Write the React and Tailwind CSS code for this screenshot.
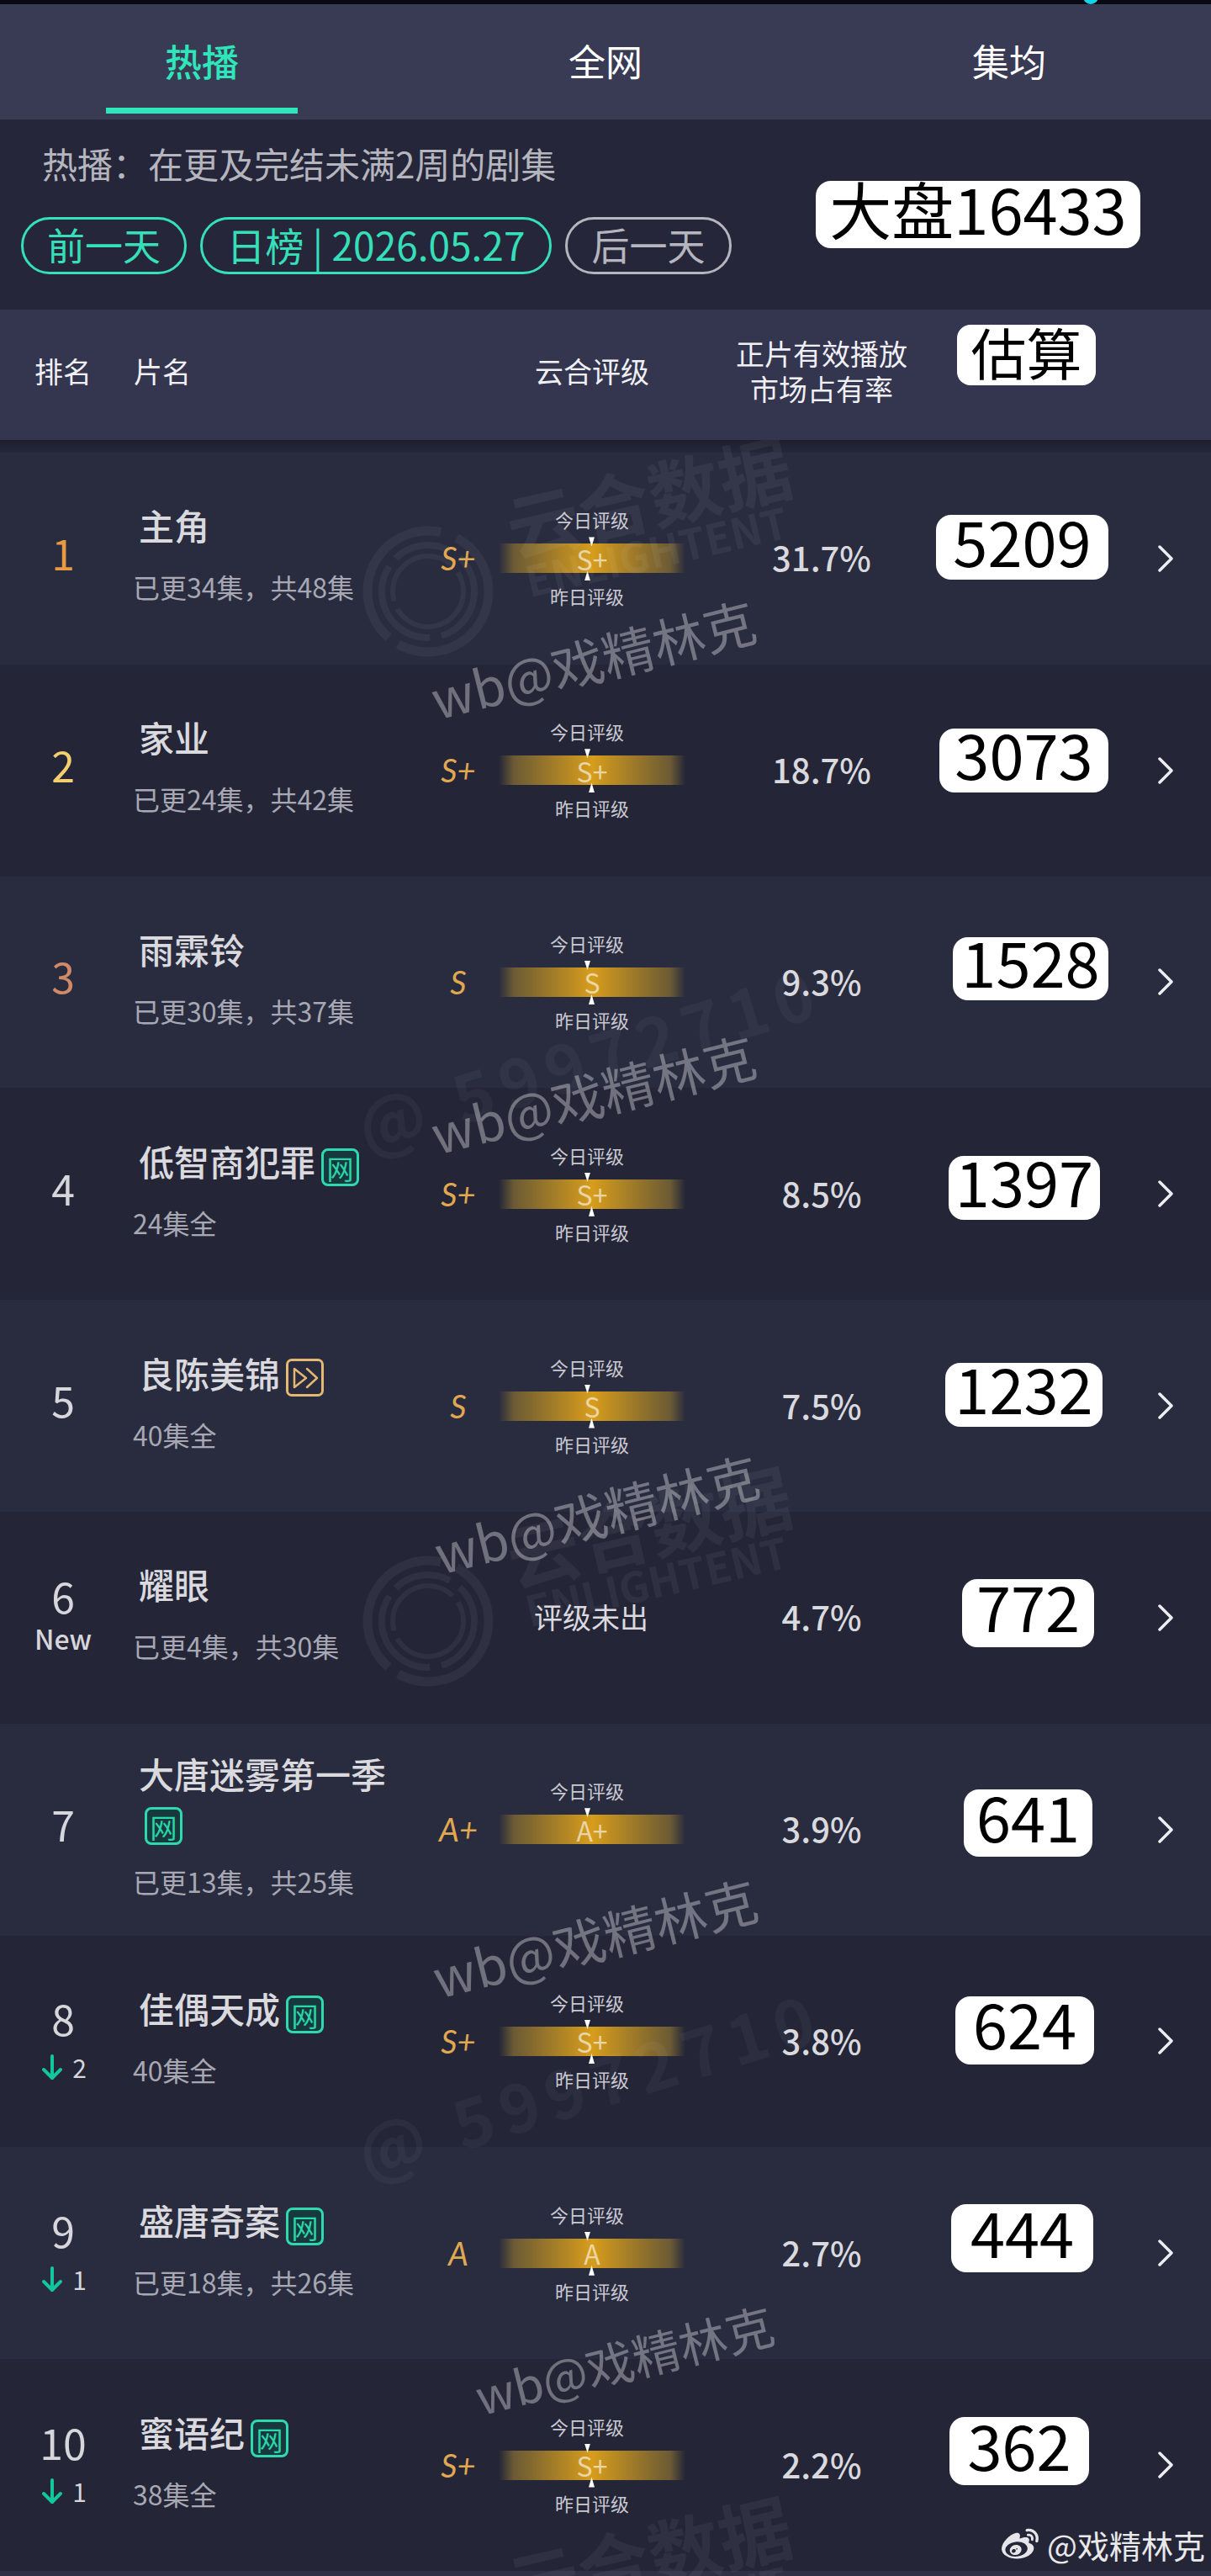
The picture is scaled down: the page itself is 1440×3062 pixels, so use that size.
import { FaWeibo } from 'react-icons/fa';

const rows = [
  { rank: '1', rankColor: 'text-[#e89a42]', title: '主角', sub: '已更34集，共48集', grade: 'S+', pct: '31.7%', value: '5209', box: 'ml-[1px] mt-[74px] w-[205px] h-[77px]', swap: true },
  { rank: '2', rankColor: 'text-[#f3cf6e]', title: '家业', sub: '已更24集，共42集', grade: 'S+', pct: '18.7%', value: '3073', box: 'ml-[5px] mt-[76px] w-[201px] h-[76px]' },
  { rank: '3', rankColor: 'text-[#d08a68]', title: '雨霖铃', sub: '已更30集，共37集', grade: 'S', pct: '9.3%', value: '1528', box: 'ml-[21px] mt-[72px] w-[185px] h-[75px]' },
  { rank: '4', title: '低智商犯罪', badge: 'net', sub: '24集全', grade: 'S+', pct: '8.5%', value: '1397', box: 'ml-[16px] mt-[81px] w-[180px] h-[76px]' },
  { rank: '5', title: '良陈美锦', badge: 'vip', sub: '40集全', grade: 'S', pct: '7.5%', value: '1232', box: 'ml-[12px] mt-[75px] w-[187px] h-[76px]' },
  { rank: '6', isNew: true, title: '耀眼', sub: '已更4集，共30集', pct: '4.7%', value: '772', box: 'ml-[32px] mt-[80px] w-[157px] h-[81px]' },
  { rank: '7', title: '大唐迷雾第一季', badge: 'net', sub: '已更13集，共25集', grade: 'A+', noYesterday: true, pct: '3.9%', value: '641', box: 'ml-[34px] mt-[78px] w-[153px] h-[80px]' },
  { rank: '8', drop: '2', title: '佳偶天成', badge: 'net', sub: '40集全', grade: 'S+', pct: '3.8%', value: '624', box: 'ml-[24px] mt-[72px] w-[165px] h-[81px]' },
  { rank: '9', drop: '1', title: '盛唐奇案', badge: 'net', sub: '已更18集，共26集', grade: 'A', pct: '2.7%', value: '444', box: 'ml-[19px] mt-[68px] w-[169px] h-[81px]' },
  { rank: '10', drop: '1', title: '蜜语纪', badge: 'net', sub: '38集全', grade: 'S+', pct: '2.2%', value: '362', box: 'ml-[17px] mt-[69px] w-[166px] h-[81px]' },
];

const NetBadge = () => (
  <span className="inline-flex w-[45px] h-[45px] ml-[7px] -my-[4px] items-center justify-center rounded-[8px] border-[3px] border-[#2fd9b0] bg-[#17393e] text-[32px] leading-none font-normal text-[#2bd6ab] align-[-4px]">
    网
  </span>
);

const VipBadge = () => (
  <span className="inline-flex w-[45px] h-[45px] ml-[7px] -my-[4px] items-center justify-center rounded-[7px] border-[3px] border-[#e3b872] align-[-4px]">
    <svg width="36" height="32" viewBox="0 0 36 32" fill="none" stroke="#e3b872" strokeWidth="2.5" strokeLinejoin="round" strokeLinecap="round">
      <path d="M5 5 V27 L19 16 Z" />
      <path d="M20 5 L32 16 L20 27" />
    </svg>
  </span>
);

const DropArrow = () => (
  <svg width="26" height="31" viewBox="0 0 26 31" fill="none" stroke="#13c79c" strokeWidth="4" strokeLinecap="round" strokeLinejoin="round">
    <path d="M13 2 V28" />
    <path d="M3 18 L13 28 L23 18" />
  </svg>
);

const Chevron = () => (
  <svg width="18" height="32" viewBox="0 0 18 32" fill="none" stroke="#eceef2" strokeWidth="3.5" strokeLinecap="round" strokeLinejoin="round">
    <path d="M2 2 L16 16 L2 30" />
  </svg>
);

const RankCell = ({ row }) => {
  let shift = 'pb-[16px]';
  if (row.drop) shift = 'pb-[7px]';
  if (row.isNew) shift = 'pb-[15px]';
  return (
    <div className={`w-[150px] flex flex-col items-center ${shift}`}>
      <div className={`text-[50px] leading-[60px] ${row.rankColor || 'text-[#d6d6db]'}`}>{row.rank}</div>
      {row.isNew && <div className="mt-[3px] text-[32px] leading-[36px] font-medium text-[#d6d6db]">New</div>}
      {row.drop && (
        <div className="mt-[9px] flex items-center gap-[11px] pl-[2px] h-[40px]">
          <DropArrow />
          <span className="text-[30px] text-[#d6d6db]">{row.drop}</span>
        </div>
      )}
    </div>
  );
};

const TitleCell = ({ row }) => (
  <div className="w-[350px] pl-[15px] pb-[14px]">
    <div className="text-[42px] leading-[55px] font-medium text-[#d9d9de]">
      {row.title}
      {row.badge === 'net' && <NetBadge />}
      {row.badge === 'vip' && <VipBadge />}
    </div>
    <div className="mt-[26px] -ml-[7px] text-[32px] leading-[40px] text-[#a7a8b3]">{row.sub}</div>
  </div>
);

const RatingCell = ({ row }) => {
  if (!row.grade) {
    return <div className="w-[342px] pl-[64px] pb-[3px] text-center text-[34px] text-[#d9d9de]">评级未出</div>;
  }
  return (
    <div className="w-[342px] flex items-center">
      <div className="w-[93px] pr-[3px] text-center font-['Lato',sans-serif] italic text-[38px] text-[#e0a850]">{row.grade}</div>
      <div className="w-[222px] flex flex-col items-stretch mt-[1px]">
        <div className={`h-[41px] text-center text-[22px] leading-[24px] text-[#c9c9d2] ${row.swap ? '' : 'pr-[12px]'}`}>今日评级</div>
        <div className="relative h-[35px] flex items-center justify-center bg-[linear-gradient(90deg,transparent,#6b5a35_8%,#d79d1c_50%,#6b5a35_92%,transparent)]">
          <span className="text-[32px] leading-none text-white/60">{row.grade}</span>
          <div className={`absolute -top-[8px] w-[7px] h-[11px] bg-white [clip-path:polygon(0_0,100%_0,50%_100%)] ${row.swap ? 'left-[107px]' : 'left-[102px]'}`} />
          {!row.noYesterday && (
            <div className={`absolute -bottom-[9px] w-[7px] h-[12px] bg-white [clip-path:polygon(50%_0,100%_100%,0_100%)] ${row.swap ? 'left-[102px]' : 'left-[107px]'}`} />
          )}
        </div>
        <div className={`h-[42px] pt-[14px] text-center text-[22px] leading-[26px] text-[#c9c9d2] ${row.swap ? 'pr-[12px]' : ''}`}>
          {!row.noYesterday && '昨日评级'}
        </div>
      </div>
    </div>
  );
};

const Row = ({ row, index }) => (
  <div className={`h-[251.8px] flex items-center ${index % 2 === 0 ? 'bg-[#292b3f]' : 'bg-[#242537]'}`}>
    <RankCell row={row} />
    <TitleCell row={row} />
    <RatingCell row={row} />
    <div className="w-[270px] pb-[3px] text-center text-[40px] font-medium text-[#d9d9de]">{row.pct}</div>
    <div className="w-[250px] self-start">
      <div className={`${row.box} flex items-center justify-center rounded-[18px] bg-white pb-[18px] text-[74px] leading-none text-black`}>
        {row.value}
      </div>
    </div>
    <div className="ml-[15px] flex"><Chevron /></div>
  </div>
);

// faint company mark that sits over the list
const BrandMark = ({ pos }) => (
  <div className={`absolute ${pos} w-[600px] h-[260px] pointer-events-none`}>
    <svg className="absolute left-0 top-[123px]" width="160" height="160" viewBox="0 0 160 160" fill="none" stroke="white" strokeOpacity="0.05">
      <circle cx="80" cy="80" r="72" strokeWidth="11" strokeDasharray="150 14 190 20" />
      <circle cx="80" cy="80" r="55" strokeWidth="8" strokeDasharray="70 14 120 12" />
      <circle cx="80" cy="80" r="42" strokeWidth="6" strokeDasharray="110 10" />
    </svg>
    <div className="absolute left-[170px] top-[45px] rotate-[-13deg] whitespace-nowrap text-[86px] leading-none font-bold text-white/5">云合数据</div>
    <div className="absolute left-[192px] top-[128px] rotate-[-13deg] whitespace-nowrap text-[50px] leading-none font-bold text-white/5">ENLIGHTENT</div>
  </div>
);

const UserMark = ({ pos, size = 'text-[62px]' }) => (
  <div className={`absolute ${pos} ${size} -translate-x-1/2 -translate-y-1/2 rotate-[-14deg] whitespace-nowrap leading-none text-white/35 pointer-events-none`}>
    wb@戏精林克
  </div>
);

const IdMark = ({ pos }) => (
  <div className={`absolute ${pos} -translate-x-1/2 -translate-y-1/2 rotate-[-17deg] whitespace-nowrap text-[80px] leading-none font-bold tracking-[0.12em] text-white/[0.04] pointer-events-none`}>
    @ 59972710
  </div>
);

export default function App() {
  return (
    <div className="relative w-[1440px] h-[3062px] overflow-hidden bg-[#25263a] font-['Noto_Sans_CJK_SC','Noto_Sans',sans-serif]">
      {/* status strip */}
      <div className="relative h-[5px] bg-[#0a0912] overflow-hidden">
        <div className="absolute left-[1288px] -top-[13px] w-[18px] h-[18px] rounded-full bg-[#12d6e8]" />
      </div>

      {/* tabs */}
      <div className="h-[137px] flex bg-[#393a54] text-[44px] text-white">
        <div className="w-[480px] flex flex-col items-center pt-[36px]">
          <div className="leading-[62px] font-medium text-[#2fe6bb]">热播</div>
          <div className="mt-[25px] w-[228px] h-[7px] bg-[#2fe6bb]" />
        </div>
        <div className="w-[480px] text-center pt-[36px] leading-[62px]">全网</div>
        <div className="w-[480px] text-center pt-[36px] leading-[62px]">集均</div>
      </div>

      {/* info panel */}
      <div className="h-[226px] flex bg-[#25263a]">
        <div className="w-[970px] pl-[25px]">
          <div className="mt-[29px] ml-[25px] text-[42px] leading-[46px] text-[#b5b5be]">热播：在更及完结未满2周的剧集</div>
          <div className="mt-[41px] flex gap-[16px] leading-none">
            <div className="w-[197px] h-[68px] pb-[4px] flex items-center justify-center rounded-full border-[3px] border-[#35dfb8] text-[45px] text-[#35dfb8]">前一天</div>
            <div className="w-[418px] h-[68px] pb-[4px] flex items-center justify-center rounded-full border-[3px] border-[#35dfb8] text-[46px] text-[#35dfb8]">日榜 | 2026.05.27</div>
            <div className="w-[198px] h-[68px] pb-[4px] flex items-center justify-center rounded-full border-[3px] border-[#b5b5be] text-[45px] text-[#b5b5be]">后一天</div>
          </div>
        </div>
        <div className="mt-[73px] w-[386px] h-[80px] flex items-center justify-center rounded-[18px] bg-white pb-[16px] text-[74px] leading-none text-black">
          大盘16433
        </div>
      </div>

      {/* table head */}
      <div className="h-[155px] pb-[10px] flex items-center bg-[#34354f] text-[34px] text-[#f0f0f4]">
        <div className="w-[150px] pl-[41px]">排名</div>
        <div className="w-[350px] pl-[9px]">片名</div>
        <div className="w-[342px] pl-[66px] text-center">云合评级</div>
        <div className="w-[270px] text-center leading-[42px]">
          正片有效播放
          <br />
          市场占有率
        </div>
        <div className="ml-[26px] self-start mt-[18px] w-[165px] h-[72px] flex items-center justify-center rounded-[16px] bg-white pb-[10px] text-[66px] leading-none text-black">
          估算
        </div>
      </div>

      {/* list */}
      <div className="relative h-[2539px] overflow-hidden">
        <div className="h-[15px] bg-gradient-to-b from-[#1e1f2e] to-[#25263a]" />
        {rows.map((row, i) => (
          <Row key={row.rank} row={row} index={i} />
        ))}
        <div className="h-[6px] bg-[#2f3046]" />

        <BrandMark pos="left-[429px] top-[-23px]" />
        <BrandMark pos="left-[429px] top-[1201px]" />
        <BrandMark pos="left-[429px] top-[2425px]" />
        <IdMark pos="left-[700px] top-[732px]" />
        <IdMark pos="left-[700px] top-[1951px]" />
        <UserMark pos="left-[705px] top-[259px]" />
        <UserMark pos="left-[705px] top-[776px]" />
        <UserMark pos="left-[709px] top-[1275px]" />
        <UserMark pos="left-[707px] top-[1779px]" />
        <UserMark pos="left-[742px] top-[2281px]" size="text-[57px]" />

        <div className="absolute left-[1188px] top-[2480px] flex items-center gap-[7px] text-[38px] leading-[44px] text-white/90">
          <FaWeibo className="w-[50px] h-[44px] text-[#e6e6ea]" />
          <span>@戏精林克</span>
        </div>
      </div>
    </div>
  );
}
